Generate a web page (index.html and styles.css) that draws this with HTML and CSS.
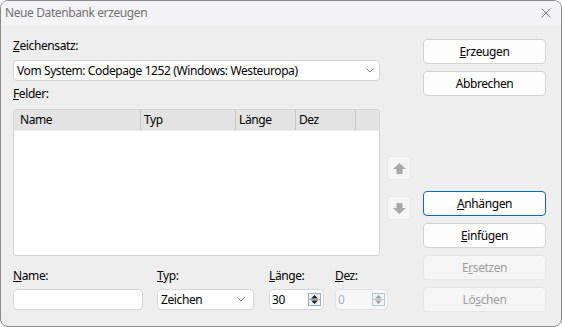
FILE: index.html
```html
<!DOCTYPE html>
<html lang="de">
<head>
    <meta charset="UTF-8">
    <title>Neue Datenbank erzeugen</title>
    <link rel="stylesheet" href="styles.css">
</head>
<body>
    <div class="window">
        <div class="titlebar">
            <span class="title">Neue Datenbank erzeugen</span>
            <svg class="close" width="10" height="10" viewBox="0 0 10 10"><path d="M0.5 0.5L9.5 9.5M9.5 0.5L0.5 9.5" stroke="#7a7a7a" stroke-width="1"/></svg>
        </div>

        <div class="dialog">
            <div class="left">
                <div class="top">
                    <div class="listcol">
                        <div class="label"><u>Z</u>eichensatz:</div>
                        <div class="combo">
                            <span>Vom System: Codepage 1252 (Windows: Westeuropa)</span>
                            <svg width="8" height="5" viewBox="0 0 8 5"><path d="M0.5 0.5L4 4L7.5 0.5" fill="none" stroke="#7d7d7d"/></svg>
                        </div>
                        <div class="label felder"><u>F</u>elder:</div>
                        <div class="list">
                            <div class="list-head">
                                <div class="col c-name">Name</div>
                                <div class="col c-typ">Typ</div>
                                <div class="col c-len">Länge</div>
                                <div class="col c-dez">Dez</div>
                                <div class="col c-rest"></div>
                            </div>
                        </div>
                    </div>
                    <div class="arrows">
                        <div class="arrow-btn up">
                            <svg width="13" height="11" viewBox="0 0 13 11"><path d="M6.5 0L13 6H9.5V11H3.5V6H0Z" fill="#a9a9a9"/></svg>
                        </div>
                        <div class="arrow-btn down">
                            <svg width="13" height="11" viewBox="0 0 13 11"><path d="M6.5 11L13 5H9.5V0H3.5V5H0Z" fill="#a9a9a9"/></svg>
                        </div>
                    </div>
                </div>

                <div class="fields">
                    <div class="field">
                        <div class="label"><u>N</u>ame:</div>
                        <div class="edit f-name"></div>
                    </div>
                    <div class="field">
                        <div class="label"><u>T</u>yp:</div>
                        <div class="edit combo f-typ">
                            <span>Zeichen</span>
                            <svg width="8" height="5" viewBox="0 0 8 5"><path d="M0.5 0.5L4 4L7.5 0.5" fill="none" stroke="#7d7d7d"/></svg>
                        </div>
                    </div>
                    <div class="field">
                        <div class="label"><u>L</u>änge:</div>
                        <div class="edit spin f-len">
                            <span>30</span>
                            <svg width="13" height="13" viewBox="0 0 13 13"><rect x="0.5" y="0.5" width="12" height="12" fill="#eef2f8" stroke="#98abc6"/><path d="M1 6.5H12" stroke="#98abc6"/><path d="M6.5 2L10 5.5H3Z" fill="#1e1e1e"/><path d="M6.5 11L10 7.5H3Z" fill="#1e1e1e"/></svg>
                        </div>
                    </div>
                    <div class="field">
                        <div class="label"><u>D</u>ez:</div>
                        <div class="edit spin disabled f-dez">
                            <span>0</span>
                            <svg width="13" height="13" viewBox="0 0 13 13"><rect x="0.5" y="0.5" width="12" height="12" fill="#f1f3f6" stroke="#bcc6d4"/><path d="M1 6.5H12" stroke="#bcc6d4"/><path d="M6.5 2L10 5.5H3Z" fill="#a3a3a3"/><path d="M6.5 11L10 7.5H3Z" fill="#a3a3a3"/></svg>
                        </div>
                    </div>
                </div>
            </div>

            <div class="buttons">
                <button class="btn"><u>E</u>rzeugen</button>
                <button class="btn">Abbrechen</button>
                <button class="btn default gap"><u>A</u>nhängen</button>
                <button class="btn"><u>E</u>infügen</button>
                <button class="btn" disabled>E<u>r</u>setzen</button>
                <button class="btn" disabled>Lö<u>s</u>chen</button>
            </div>
        </div>
    </div>
</body>
</html>
```

FILE: styles.css
```css
* {
    box-sizing: border-box;
}
html, body {
    margin: 0;
    background: #fff;
}
body {
    font-family: "Noto Sans", sans-serif;
    font-size: 12px;
    letter-spacing: -0.4px;
    color: #000;
}
u {
    text-underline-offset: 1px;
}
.window {
    width: 562px;
    height: 327px;
    border: 1px solid #8b8b8b;
    border-radius: 8px;
    background: #eeeeee;
    overflow: hidden;
    display: flex;
    flex-direction: column;
}
.titlebar {
    height: 24px;
    flex: none;
    background: #f4f4f6;
    display: flex;
    align-items: center;
    justify-content: space-between;
    padding: 0 10px 0 4px;
    color: #727272;
    line-height: 16px;
}
.dialog {
    flex: 1;
    display: flex;
    padding: 13px 15px 0 12px;
}
.left {
    width: 398px;
}
.top {
    display: flex;
}
.listcol {
    width: 367px;
}
.label {
    height: 16px;
    line-height: 16px;
}
.combo {
    margin-top: 6px;
    height: 21px;
    background: #fff;
    border: 1px solid #d6d6d6;
    border-radius: 4px;
    display: flex;
    align-items: center;
    justify-content: space-between;
    padding: 0 5px 0 3px;
}
.felder {
    margin-top: 5px;
}
.list {
    margin-top: 7px;
    height: 147px;
    background: #fff;
    border: 1px solid #d3d3d3;
    border-radius: 3px;
    overflow: hidden;
}
.list-head {
    display: flex;
    height: 21px;
    background: #e3e3e3;
    border-bottom: 1px solid #ededed;
}
.col {
    line-height: 20px;
    padding-left: 3px;
    border-right: 1px solid #c8c8c8;
}
.c-name {
    width: 127px;
    padding-left: 6px;
}
.c-typ {
    width: 95px;
}
.c-len {
    width: 60px;
}
.c-dez {
    width: 60px;
}
.c-rest {
    flex: 1;
    border-right: none;
}
.arrows {
    margin-left: 7px;
    display: flex;
    flex-direction: column;
}
.arrow-btn {
    width: 24px;
    height: 24px;
    background: #f5f5f5;
    border: 1px solid #e7e7e7;
    border-radius: 3px;
    display: flex;
    align-items: center;
    justify-content: center;
}
.up {
    margin-top: 118px;
}
.down {
    margin-top: 16px;
}
.fields {
    display: grid;
    grid-template-columns: 144px 112px 66px 53px;
    margin-top: 12px;
}
.edit {
    margin-top: 5px;
    height: 21px;
    background: #fff;
    border: 1px solid #d6d6d6;
    border-radius: 4px;
}
.f-name {
    width: 130px;
}
.f-typ {
    width: 97px;
    padding: 0 8px 0 3px;
}
.spin {
    display: flex;
    align-items: center;
    justify-content: space-between;
    padding: 0 2px 0 2px;
}
.f-len {
    width: 55px;
}
.f-dez {
    width: 53px;
}
.spin.disabled {
    background: #f7f7f7;
    border-color: #e3e3e3;
    color: #a7b4c7;
}
.buttons {
    margin-left: 12px;
    width: 123px;
    display: flex;
    flex-direction: column;
    padding-top: 1px;
}
.btn {
    height: 25px;
    margin: 0 0 7px;
    padding: 0;
    font: inherit;
    letter-spacing: inherit;
    color: #000;
    background: #fdfdfd;
    border: 1px solid #d3d3d3;
    border-radius: 4px;
}
.btn.gap {
    margin-top: 88px;
}
.btn.default {
    border-color: #0a67c2;
}
.btn:disabled {
    background: #f5f5f5;
    border-color: #e6e6e6;
    color: #9e9e9e;
}
```
